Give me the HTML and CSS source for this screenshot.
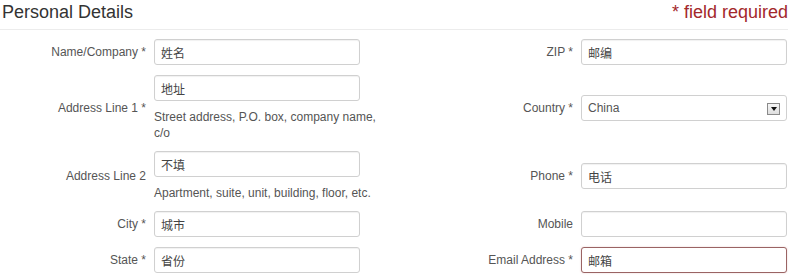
FILE: index.html
```html
<html>
    <head>
        <title>Personal Details</title>
        <link rel="stylesheet" href="styles.css">
    </head>
    <body>
        <div class="panel">
            <div class="panel-head">
                <h3 class="title">Personal Details</h3>
                <span class="required-note">* field required</span>
            </div>

            <div class="form-grid">
                <label class="lbl" for="name">Name/Company *</label>
                <div class="field"><input class="txt" id="name" type="text" value="姓名"></div>
                <label class="lbl" for="zip">ZIP *</label>
                <div class="field"><input class="txt" id="zip" type="text" value="邮编"></div>

                <label class="lbl" for="addr1">Address Line 1 *</label>
                <div class="field">
                    <input class="txt" id="addr1" type="text" value="地址">
                    <p class="hint">Street address, P.O. box, company name, c/o</p>
                </div>
                <label class="lbl" for="country">Country *</label>
                <div class="field">
                    <div class="select-wrap">
                        <select class="sel" id="country">
                            <option>China</option>
                        </select>
                        <span class="sel-btn"><span class="caret"></span></span>
                    </div>
                </div>

                <label class="lbl" for="addr2">Address Line 2</label>
                <div class="field">
                    <input class="txt" id="addr2" type="text" value="不填">
                    <p class="hint">Apartment, suite, unit, building, floor, etc.</p>
                </div>
                <label class="lbl" for="phone">Phone *</label>
                <div class="field"><input class="txt" id="phone" type="text" value="电话"></div>

                <label class="lbl" for="city">City *</label>
                <div class="field"><input class="txt" id="city" type="text" value="城市"></div>
                <label class="lbl" for="mobile">Mobile</label>
                <div class="field"><input class="txt" id="mobile" type="text" value=""></div>

                <label class="lbl" for="state">State *</label>
                <div class="field"><input class="txt" id="state" type="text" value="省份"></div>
                <label class="lbl" for="email">Email Address *</label>
                <div class="field"><input class="txt txt-error" id="email" type="text" value="邮箱"></div>
            </div>
        </div>
    </body>
</html>
```

FILE: styles.css
```css
body
{
    margin: 0;
    background-color: #fff;
    font-family: "Liberation Sans", Arial, "Noto Sans CJK SC", sans-serif;
    color: #555;
}

.panel
{
    width: 788px;
    padding-left: 2px;
    box-sizing: border-box;
}

.panel-head
{
    display: flex;
    justify-content: space-between;
    align-items: flex-start;
    padding-top: 2px;
    height: 27px;
    border-bottom: 1px solid #ececec;
    margin-left: -2px;
    padding-left: 2px;
}

.title
{
    margin: 0;
    font-size: 18px;
    line-height: 20px;
    font-weight: normal;
    color: #333;
}

.required-note
{
    font-size: 18px;
    line-height: 20px;
    color: #a3282b;
}

.form-grid
{
    display: grid;
    grid-template-columns: 144px 206px 205px 206px;
    column-gap: 8px;
    row-gap: 10px;
    align-items: center;
    margin-top: 9px;
}

.lbl
{
    text-align: right;
    font-size: 12px;
    color: #555;
}

.txt
{
    display: block;
    width: 206px;
    height: 26px;
    box-sizing: border-box;
    padding: 3px 6px;
    border: 1px solid #d0d0d0;
    border-radius: 3px;
    box-shadow: inset 0 1px 1px rgba(0, 0, 0, 0.06);
    font-family: "Noto Sans CJK SC", "Liberation Sans", sans-serif;
    font-size: 12px;
    color: #444;
    outline: none;
}

.txt-error
{
    border-color: #9a6464;
    box-shadow: 0 0 2px rgba(190, 110, 110, 0.35);
}

.hint
{
    width: 232px;
    margin: 8px 0 0 0;
    font-size: 12px;
    line-height: 16px;
    color: #555;
}

.select-wrap
{
    position: relative;
    width: 206px;
}

.sel
{
    display: block;
    width: 206px;
    height: 26px;
    box-sizing: border-box;
    padding: 3px 6px;
    border: 1px solid #d0d0d0;
    border-radius: 3px;
    background-color: #fff;
    font-family: "Liberation Sans", sans-serif;
    font-size: 12px;
    color: #555;
    appearance: none;
    -webkit-appearance: none;
    outline: none;
}

.sel-btn
{
    position: absolute;
    right: 7px;
    top: 8px;
    width: 13px;
    height: 12px;
    box-sizing: border-box;
    border: 1px solid #8a8a8a;
    background: linear-gradient(#f6f6f6, #dedede);
    display: flex;
    align-items: center;
    justify-content: center;
    pointer-events: none;
}

.caret
{
    width: 0;
    height: 0;
    border-left: 3px solid transparent;
    border-right: 3px solid transparent;
    border-top: 4px solid #111;
}
```
